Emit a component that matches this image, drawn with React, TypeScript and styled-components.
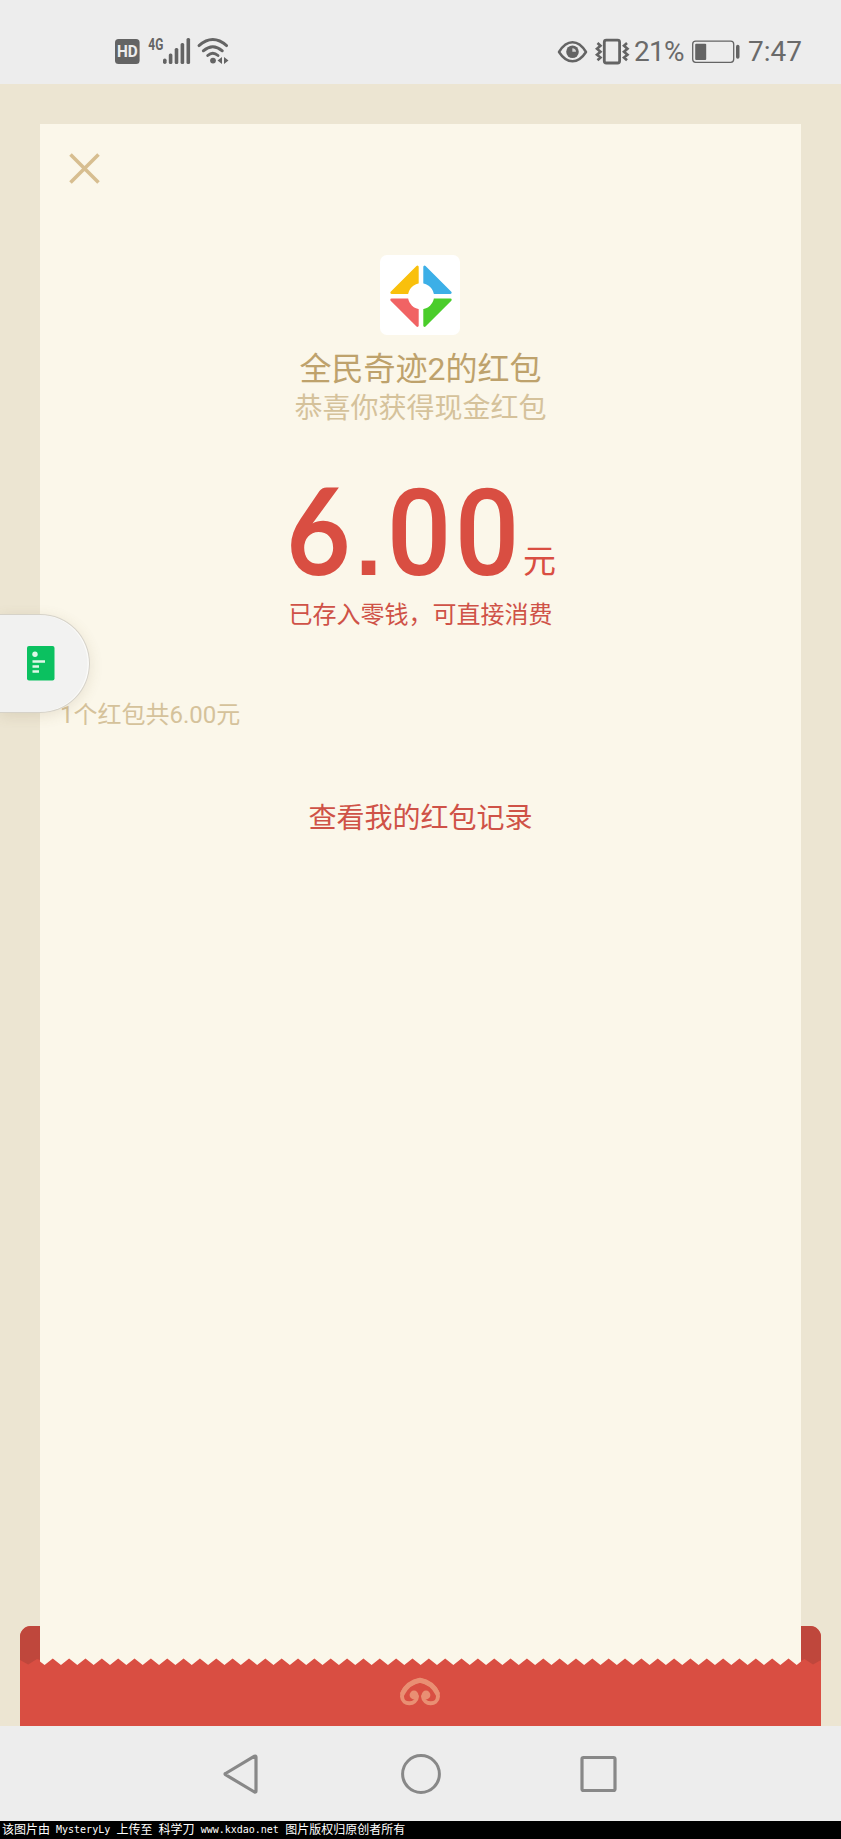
import React from "react";
import styled, { createGlobalStyle } from "styled-components";

const GlobalStyle = createGlobalStyle`
  * { box-sizing: border-box; }
  body { margin: 0; background: #ededed; }
`;

const sans = `Roboto, "Noto Sans CJK SC", sans-serif`;

const Screen = styled.div`
  width: 841px;
  height: 1839px;
  display: flex;
  flex-direction: column;
  overflow: hidden;
  font-family: ${sans};
`;

const StatusBar = styled.header`
  height: 84px;
  flex: none;
  display: flex;
  justify-content: space-between;
  padding: 20px 37px 0 110px;
  background: #ededed;
  color: #6a6a6a;
`;

const StatusGroup = styled.div`
  display: flex;
  height: 64px;
  align-items: center;
`;

const StatusText = styled.span<{ $width: number; $tracking?: number; $indent?: number }>`
  width: ${(p) => p.$width}px;
  padding-left: ${(p) => p.$indent ?? 0}px;
  font-size: 28px;
  font-weight: 400;
  line-height: 66px;
  letter-spacing: ${(p) => p.$tracking ?? 0}px;
  white-space: nowrap;
`;

const Backdrop = styled.main`
  position: relative;
  height: 1642px;
  flex: none;
  display: flex;
  flex-direction: column;
  padding-top: 40px;
  background: #ece5d2;
`;

const Card = styled.section`
  width: 761px;
  height: 1502px;
  flex: none;
  margin: 0 auto 0 40px;
  display: flex;
  flex-direction: column;
  align-items: center;
  background: #fbf7ea;
`;

const CloseButton = styled.button`
  align-self: flex-start;
  width: 31px;
  height: 31px;
  margin: 29px 0 0 29px;
  padding: 0;
  border: 0;
  background: none;
  display: flex;
`;

const Avatar = styled.div`
  width: 80px;
  height: 80px;
  margin: 71px 1px 0 0;
  border-radius: 7px;
  background: #fff;
  display: flex;
`;

const Line = styled.p<{ $size: number; $height: number; $color: string; $top?: number }>`
  margin: ${(p) => p.$top ?? 0}px 0 0;
  font-size: ${(p) => p.$size}px;
  line-height: ${(p) => p.$height}px;
  height: ${(p) => p.$height}px;
  color: ${(p) => p.$color};
  white-space: nowrap;
`;

const Amount = styled.div`
  display: flex;
  align-items: baseline;
  height: 100px;
  margin-top: 52px;
  color: #d94e42;
  line-height: 100px;
  white-space: nowrap;
`;

const Digit = styled.span<{ $width: number; $face?: string; $weight: number; $stretch?: number; $size?: number }>`
  display: flex;
  justify-content: center;
  width: ${(p) => p.$width}px;
  font-family: ${(p) => p.$face ?? "Roboto"}, sans-serif;
  font-size: ${(p) => p.$size ?? 121}px;
  font-weight: ${(p) => p.$weight};
  transform: scaleX(${(p) => p.$stretch ?? 1});
`;

const Unit = styled.span`
  align-self: flex-end;
  font-size: 33px;
  line-height: 40px;
  margin: 0 0 -3px 2px;
`;

const Summary = styled(Line)`
  align-self: flex-start;
  padding-left: 20px;
`;

const Envelope = styled.footer`
  height: 100px;
  flex: none;
  display: flex;
  justify-content: center;
`;

const FloatingTab = styled.aside`
  position: absolute;
  left: 0;
  top: 530px;
  width: 90px;
  height: 99px;
  border: 1px solid #d6d2c8;
  border-left: 0;
  border-radius: 0 50px 50px 0;
  background: rgba(241, 241, 241, 0.95);
  box-shadow: inset -1.5px 0 0 0 #fafaf8, 0 3px 14px rgba(120, 100, 60, 0.14);
  display: flex;
  align-items: center;
  padding-left: 27px;
`;

const NavBar = styled.nav`
  height: 95px;
  flex: none;
  display: flex;
  justify-content: center;
  align-items: center;
  gap: 137.5px;
  background: #ededed;
`;

const Credit = styled.div`
  height: 18px;
  flex: none;
  padding-left: 2px;
  background: #000;
  color: #fff;
  font: 12px/18px "DejaVu Sans Mono", "Noto Sans CJK SC", monospace;
  white-space: pre;
  display: flex;
`;

const Latin = styled.span`
  font-size: 10px;
  font-family: "DejaVu Sans Mono", monospace;
  margin: 0 6.4px 0 6px;
`;

const Spaced = styled.span`
  margin-right: 6px;
`;

const NetworkIcons = () => (
  <svg width="130" height="64" viewBox="110 20 130 64" fill="#646464">
    <rect x="115" y="39" width="24.6" height="25" rx="3.5" />
    <text x="117" y="57.4" fill="#ededed" fontFamily="Roboto" fontWeight="700" fontSize="16.5" textLength="20.8" lengthAdjust="spacingAndGlyphs">HD</text>
    <text x="148.3" y="50" fontFamily="Roboto" fontWeight="700" fontSize="16" textLength="15" lengthAdjust="spacingAndGlyphs">4G</text>
    <rect x="163" y="58.5" width="3.6" height="5.5" rx="1.8" />
    <rect x="168.8" y="53.5" width="3.6" height="10.5" rx="1.5" />
    <rect x="174.7" y="48" width="3.6" height="16" rx="1.5" />
    <rect x="180.6" y="43" width="3.6" height="21" rx="1.5" />
    <rect x="186.5" y="38" width="3.6" height="26" rx="1.5" />
    <g fill="none" stroke="#646464" strokeWidth="2.9" strokeLinecap="round">
      <path d="M199 45.6Q212.8 33.6 226.6 45.6" />
      <path d="M203.3 50.8Q212.8 42.6 222.3 50.8" />
      <path d="M207.7 55.5Q212.8 51 218 55.5" />
    </g>
    <circle cx="213" cy="60.6" r="2.9" />
    <path d="M217.5 60.5L222 57V64ZM228.5 60.5L224 57V64Z" />
  </svg>
);

const EyeAndVibrate = () => (
  <svg width="77" height="64" viewBox="557 20 77 64" fill="none" stroke="#646464">
    <path d="M559 52Q565 42.3 572.5 42.3T586 52Q580 61.3 572.5 61.3T559 52Z" strokeWidth="2.5" strokeLinejoin="round" />
    <circle cx="572.5" cy="51.8" r="6.3" fill="#646464" stroke="none" />
    <path d="M572.3 51.8V48.2A3.7 3.7 0 0 1 576 51.8Z" fill="#d4d4d4" stroke="none" />
    <rect x="604.3" y="40.2" width="15.3" height="22.8" rx="2" strokeWidth="2.8" />
    <path d="M597.5 43L600.5 45.7L597 48.7L600.5 51.7L597 54.7L600.5 57.5L597.5 60.3M627 43L624 45.7L627.5 48.7L624 51.7L627.5 54.7L624 57.5L627 60.3" strokeWidth="2.6" />
  </svg>
);

const Battery = () => (
  <svg width="56" height="64" viewBox="691 20 56 64" fill="#646464">
    <rect x="692.7" y="41.1" width="41" height="21.2" rx="3" fill="none" stroke="#646464" strokeWidth="1.3" />
    <rect x="695.2" y="43.7" width="11" height="16.3" rx="1" />
    <rect x="736" y="44.7" width="3.5" height="14" rx="1.7" />
  </svg>
);

const Pinwheel = () => (
  <svg width="80" height="80" viewBox="0 0 80 80" strokeWidth="2.6" strokeLinejoin="round">
    <path d="M37.4 11.8V28.8A13.7 13.7 0 0 0 29 37.6H11.6Z" fill="#f9c00c" stroke="#f9c00c" />
    <path d="M44.6 11.8V28.8A13.7 13.7 0 0 1 53 37.6H70.4Z" fill="#3cafe7" stroke="#3cafe7" />
    <path d="M37.4 70.6V53.6A13.7 13.7 0 0 1 29 44.8H11.6Z" fill="#f16364" stroke="#f16364" />
    <path d="M44.6 70.6V53.6A13.7 13.7 0 0 0 53 44.8H70.4Z" fill="#4acd2b" stroke="#4acd2b" />
    <circle cx="41" cy="41.2" r="13" fill="#fff" />
  </svg>
);

const TOOTH = 16.35;

/* Run of paper teeth, starting in a valley at x and ending past the right edge. */
const teeth = (start: number, count: number) =>
  Array.from({ length: count }, (_, i) => {
    const x = start + i * TOOTH;
    return `L${x.toFixed(2)} 39L${(x + TOOTH / 2).toFixed(2)} 32.5`;
  }).join("");

const EnvelopeArt = () => (
  <svg width="801" height="100" viewBox="0 0 801 100">
    <path d="M0 100V11A11 11 0 0 1 11 0H790A11 11 0 0 1 801 11V100Z" fill="#d94e42" />
    <path d="M0 34V11A11 11 0 0 1 11 0H20V34L17 33L8.2 38.5Z" fill="#bf473c" />
    <path d="M801 34V11A11 11 0 0 0 790 0H781V35L784.5 33L793 38.5Z" fill="#bf473c" />
    <path d={`M20 0V35.5${teeth(24.6, 46)}L776.7 39L781 35.5V0Z`} fill="#fbf7ea" />
    <g fill="none" stroke="#e98f73" strokeLinecap="round" strokeLinejoin="round">
      <path d="M397 70.5C396.5 79 382.5 80 382 70.5C382 63 390 57 400 54C410 57 418 63 418 70.5C417.5 80 403.5 79 403 70.5" strokeWidth="4" />
      <path d="M382.8 67C386 60.5 391 56 400 54.3C409 56 414 60.5 417.2 67" strokeWidth="5" />
    </g>
    <circle cx="394" cy="69" r="4.4" fill="#e98f73" />
    <circle cx="406" cy="69" r="4.4" fill="#e98f73" />
  </svg>
);

const NoteIcon = () => (
  <svg width="28" height="35" viewBox="0 0 28 35">
    <rect width="27.5" height="34.5" rx="2" fill="#0bc160" />
    <circle cx="8" cy="8.3" r="2.7" fill="#dff8e8" />
    <path d="M5.5 15.5H18M5.5 20.5H12M5.5 25.5H12" stroke="#dff8e8" strokeWidth="2.6" />
  </svg>
);

const NavIcons = () => (
  <>
    <svg width="40" height="44" viewBox="0 0 40 44" fill="none" stroke="#888" strokeWidth="3.2" strokeLinejoin="round">
      <path d="M3.5 21.5Q2.5 22 3.5 22.7L32.5 40Q34 40.5 34 39V5Q34 3.5 32.5 4.2Z" />
    </svg>
    <svg width="42" height="42" viewBox="0 0 42 42" fill="none" stroke="#888" strokeWidth="3">
      <circle cx="21" cy="21" r="18.4" />
    </svg>
    <svg width="40" height="40" viewBox="0 0 40 40" fill="none" stroke="#888" strokeWidth="3.2">
      <rect x="3" y="3.5" width="33" height="33" rx="1.5" />
    </svg>
  </>
);

export default function App() {
  return (
    <Screen>
      <GlobalStyle />
      <StatusBar>
        <StatusGroup>
          <NetworkIcons />
        </StatusGroup>
        <StatusGroup>
          <EyeAndVibrate />
          <StatusText $width={57} $tracking={-0.7}>21%</StatusText>
          <Battery />
          <StatusText $width={57} $indent={1}>7:47</StatusText>
        </StatusGroup>
      </StatusBar>
      <Backdrop>
        <Card>
          <CloseButton aria-label="关闭">
            <svg width="31" height="31" viewBox="0 0 31 31" stroke="#d7be90" strokeWidth="3.6">
              <path d="M1.5 1.5L29.5 29.5M29.5 1.5L1.5 29.5" />
            </svg>
          </CloseButton>
          <Avatar>
            <Pinwheel />
          </Avatar>
          <Line $size={32} $height={42} $color="#bea26c" $top={13}>全民奇迹2的红包</Line>
          <Line $size={28} $height={36} $color="#d5c29b" $top={1}>恭喜你获得现金红包</Line>
          <Amount>
            <Digit $width={67} $face="Lato" $weight={700} $stretch={0.91}>6</Digit>
            <Digit $width={33} $face="Liberation Sans" $weight={700} $size={96}>.</Digit>
            <Digit $width={68} $weight={500} $stretch={0.94}>0</Digit>
            <Digit $width={68} $weight={500} $stretch={0.94}>0</Digit>
            <Unit>元</Unit>
          </Amount>
          <Line $size={24} $height={32} $color="#cf5247" $top={20}>已存入零钱，可直接消费</Line>
          <Summary $size={24} $height={32} $color="#d5c29b" $top={68}>1个红包共6.00元</Summary>
          <Line $size={28} $height={36} $color="#cf5247" $top={70}>查看我的红包记录</Line>
        </Card>
        <Envelope>
          <EnvelopeArt />
        </Envelope>
        <FloatingTab>
          <NoteIcon />
        </FloatingTab>
      </Backdrop>
      <NavBar>
        <NavIcons />
      </NavBar>
      <Credit>
        <span>该图片由</span>
        <Latin>MysteryLy</Latin>
        <Spaced>上传至</Spaced>
        <span>科学刀</span>
        <Latin>www.kxdao.net</Latin>
        <span>图片版权归原创者所有</span>
      </Credit>
    </Screen>
  );
}
